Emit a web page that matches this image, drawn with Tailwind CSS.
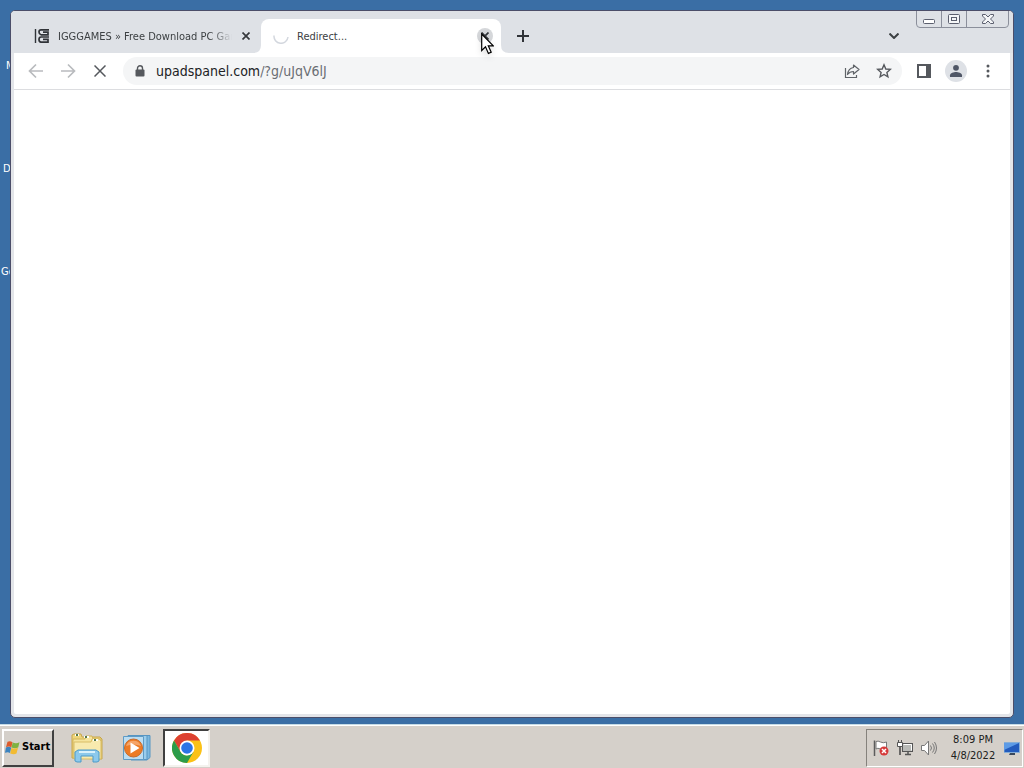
<!DOCTYPE html>
<html lang="en">
<head>
<meta charset="utf-8">
<title>Desktop</title>
<script src="https://cdn.jsdelivr.net/npm/@tailwindcss/browser@4"></script>
</head>
<body class="h-screen overflow-hidden flex flex-col bg-[#3a6ea5] font-['DejaVu_Sans_Condensed','DejaVu_Sans',sans-serif] text-[#3c4043]">
<main class="relative flex-1 min-h-0 flex pt-[10px] pl-[10px] pr-[10px] pb-[6px]">
  <!-- desktop shortcut labels, partly behind the window -->
  <div class="absolute left-0 top-0 w-[11px] h-full overflow-hidden text-white text-[11px] leading-4">
    <span class="absolute left-[6px] top-[58px]">M</span>
    <span class="absolute left-[3px] top-[161px]">D</span>
    <span class="absolute left-[1px] top-[264px]">Go</span>
  </div>

  <section class="relative flex-1 min-w-0 flex flex-col bg-[#e3e5e9] border border-[#4b4e69] rounded-[5px] px-[3px] pb-[3px] overflow-hidden" aria-label="Browser window">
    <!-- tab strip -->
    <header class="h-[42px] shrink-0 flex items-end bg-[#dee1e6] -mx-[3px] pl-[10px]">
      <div class="w-[240px] h-[34px] flex items-center pl-[13px] pr-[7px]">
        <svg class="w-4 h-4 shrink-0" viewBox="0 0 16 16" fill="none" stroke="#303338"><path d="M1.500 1v14" stroke-width="1.400"/><path d="M15 1.800H7Q5 1.800 5 4t2 2.800h7V4.200H9M15 9H7Q5 9 5 11.500t2 2.700h7v-2.800H9" stroke-width="1.700"/></svg>
        <a href="#" class="flex-1 min-w-0 ml-[8px] mr-[6px] h-4 overflow-hidden whitespace-nowrap text-[11px] leading-[18px] [mask-image:linear-gradient(to_right,black_88%,transparent)]">IGGGAMES » Free Download PC Games</a>
        <button class="w-4 h-4 shrink-0 flex items-center justify-center" aria-label="Close tab"><svg class="w-2 h-2" viewBox="0 0 8 8" stroke="#36393d" stroke-width="1.700"><path d="M.5.5l7 7M7.500.5l-7 7"/></svg></button>
      </div>
      <div class="relative w-[240px] h-[34px] flex items-center pl-[12px] pr-[8px] bg-white rounded-t-[8px]">
        <svg class="absolute -left-[8px] bottom-0 w-2 h-2" viewBox="0 0 8 8"><path d="M8 0v8H0Q8 8 8 0" fill="#fff"/></svg>
        <svg class="absolute -right-[8px] bottom-0 w-2 h-2" viewBox="0 0 8 8"><path d="M0 0v8h8Q0 8 0 0" fill="#fff"/></svg>
        <svg class="w-4 h-4 shrink-0" viewBox="0 0 16 16" fill="none" stroke="#d3d7de" stroke-width="1.500"><path d="M1 7.500a7 7 0 0 0 14 1.500"/></svg>
        <a href="#" class="flex-1 ml-[8px] h-4 text-[11px] leading-[18px]">Redirect...</a>
        <button class="w-4 h-4 shrink-0 flex items-center justify-center rounded-full bg-[#d5d7da]" aria-label="Close tab"><svg class="w-2 h-2" viewBox="0 0 8 8" stroke="#36393d" stroke-width="1.700"><path d="M.5.5l7 7M7.500.5l-7 7"/></svg></button>
      </div>
      <button class="w-7 h-[34px] ml-[8px] flex items-center justify-center" aria-label="New tab"><svg class="w-3 h-3" viewBox="0 0 12 12" stroke="#303338" stroke-width="2"><path d="M6 0v12M0 6h12"/></svg></button>
      <button class="w-7 h-[34px] ml-auto mr-[105px] flex items-center justify-center" aria-label="Search tabs"><svg class="w-[10px] h-[6px]" viewBox="0 0 10 6" fill="none" stroke="#3c4043" stroke-width="2"><path d="M.5.5L5 5 9.500.5"/></svg></button>
    </header>

    <!-- caption buttons -->
    <div class="absolute right-[4px] -top-[1px] w-[93px] h-[18px] flex border border-[#8b8f9b] rounded-b-[4px]">
      <button class="w-[25px] flex items-center justify-center border-r border-[#8b8f9b]" aria-label="Minimize"><svg class="w-3 h-[5px] mt-1" viewBox="0 0 12 5"><rect x=".5" y=".5" width="11" height="4" rx="1" fill="#fff" stroke="#5b5f6e"/></svg></button>
      <button class="w-[25px] flex items-center justify-center border-r border-[#8b8f9b]" aria-label="Maximize"><svg class="w-3 h-[10px]" viewBox="0 0 12 10" fill="#f5f6f8" stroke="#5b5f6e"><rect x=".5" y=".5" width="11" height="9" rx="1"/><rect x="3.500" y="3.500" width="5" height="3"/></svg></button>
      <button class="flex-1 flex items-center justify-center" aria-label="Close"><svg class="w-3 h-[10px]" viewBox="0 0 12 10"><path d="M.5.5h3L6 3 8.500.5h3v1.500L8.500 5l3 3v1.500h-3L6 7 3.500 9.500h-3V8l3-3-3-3z" fill="#f5f6f8" stroke="#5b5f6e"/></svg></button>
    </div>

    <!-- toolbar -->
    <nav class="h-[37px] shrink-0 flex items-center bg-white border-b border-[#dcdde0] pl-[6px] pr-[6px] text-[#5f6368]">
      <button class="w-8 h-7 flex items-center justify-center" aria-label="Back"><svg class="w-4 h-4" viewBox="0 0 16 16" fill="none" stroke="#b9bbbe" stroke-width="1.700"><path d="M15 8H2M8 1.500L1.500 8 8 14.500"/></svg></button>
      <button class="w-8 h-7 flex items-center justify-center" aria-label="Forward"><svg class="w-4 h-4" viewBox="0 0 16 16" fill="none" stroke="#b9bbbe" stroke-width="1.700"><path d="M1 8h13M8 1.500L14.500 8 8 14.500"/></svg></button>
      <button class="w-8 h-7 flex items-center justify-center" aria-label="Stop loading"><svg class="w-3 h-3" viewBox="0 0 12 12" stroke="#55585d" stroke-width="1.500"><path d="M.5.5l11 11M11.500.5l-11 11"/></svg></button>
      <div class="flex-1 min-w-0 h-7 ml-[7px] flex items-center bg-[#f4f5f6] rounded-full pl-[12px] pr-[2px]">
        <svg class="w-[10px] h-3 shrink-0" viewBox="0 0 10 12"><path d="M2.500 5V3.300a2.500 2.500 0 0 1 5 0V5" fill="none" stroke="#55585d" stroke-width="1.400"/><rect x=".5" y="4.500" width="9" height="7" rx="1" fill="#55585d"/></svg>
        <a href="#" class="flex-1 ml-[11px] text-[14px] leading-5 whitespace-nowrap text-[#6a6e73]"><span class="text-[#202124]">upadspanel.com</span>/?g/uJqV6lJ</a>
        <button class="w-8 h-7 flex items-center justify-center" aria-label="Share"><svg class="w-4 h-4" viewBox="0 0 16 16" fill="none" stroke="#5f6368" stroke-width="1.200"><path d="M1.500 5v9.500h11V12"/><path d="M9.500 2l5.500 4.500-5.500 4.500V8.500C6.500 8.500 5 9.500 3.500 11.500 4 7.500 6 5 9.500 4.500z" stroke-linejoin="round"/></svg></button>
        <button class="w-8 h-7 flex items-center justify-center" aria-label="Bookmark"><svg class="w-4 h-4" viewBox="0 0 16 16" fill="none" stroke="#55585d" stroke-width="1.400"><path d="M8 1.800l1.800 4.200 4.500.4-3.400 3 1 4.400L8 11.500l-3.900 2.300 1-4.400-3.400-3 4.500-.4z"/></svg></button>
      </div>
      <button class="w-8 h-7 ml-[6px] flex items-center justify-center" aria-label="Side panel"><svg class="w-[14px] h-[14px]" viewBox="0 0 14 14"><path d="M1 1h12v12H1z" fill="#fff" stroke="#55585d" stroke-width="2"/><path d="M9 0h5v14H9z" fill="#55585d"/></svg></button>
      <button class="w-8 h-7 flex items-center justify-center" aria-label="Profile"><svg class="w-[22px] h-[22px]" viewBox="0 0 22 22"><circle cx="11" cy="11" r="11" fill="#dee1e6"/><g fill="#4f5666"><circle cx="11" cy="7.800" r="2.900"/><path d="M5 17v-1.700c0-2.300 4-3.300 6-3.300s6 1 6 3.300V17z"/></g></svg></button>
      <button class="w-8 h-7 flex items-center justify-center" aria-label="Menu"><svg class="w-1 h-[14px]" viewBox="0 0 4 14" fill="#55585d"><circle cx="2" cy="2" r="1.500"/><circle cx="2" cy="7" r="1.500"/><circle cx="2" cy="12" r="1.500"/></svg></button>
    </nav>
    <div class="flex-1 bg-white rounded-b-[2px]"></div>
  </section>

  <!-- mouse pointer -->
  <svg class="absolute left-[481px] top-[33px] w-[13px] h-[22px] drop-shadow-md pointer-events-none" viewBox="0 0 13 22"><path d="M.7 1v16.500l3.800-3.700 2.900 6.600 2.800-1.200-2.900-6.400h5z" fill="#fff" stroke="#000" stroke-width="1.200"/></svg>
</main>

<!-- taskbar -->
<footer class="h-[44px] shrink-0 flex items-center bg-[#d5d0ca] border-t border-[#c6dbe5] shadow-[inset_0_1px_0_#fff] pt-[2px] pl-[2px]">
  <button class="w-[52px] h-[38px] flex items-center gap-[2px] pl-px border-2 border-t-white border-l-white border-b-[#404040] border-r-[#404040] font-bold text-[11px] text-black">
    <svg class="w-[15px] h-[15px] shrink-0" viewBox="0 0 15 15"><path d="M2.500 1.800Q5 .3 7.500 2.200L6.300 7.400Q4 5.800 1 7.300z" fill="#dd5a2b"/><path d="M7.700 2.400Q11 4 14.500 2.300L13.200 7.500Q10 9 6.500 7.600z" fill="#7fb241"/><path d="M.9 7.500Q4 6 6.200 7.700l-1.200 5.400Q3 11.500 0 12.800z" fill="#3c83bf"/><path d="M6.400 7.900Q10 9.300 13 7.800L11.500 13.500Q9 15 5.200 13.400z" fill="#f2bb32"/></svg>Start
  </button>
  <button class="w-[34px] h-[38px] ml-[16px] flex items-center justify-center" aria-label="File Explorer">
    <svg class="w-8 h-[30px]" viewBox="0 0 32 30" stroke-linejoin="round"><path d="M1 25V2l2-1h7l1 3h18l2 2v20z" fill="#eed57a" stroke="#c7a64d"/><path d="M2 25V6h12l1-3h6l1 3h8v19z" fill="#f5e49c" stroke="#d2b45b"/><path d="M3 26V9h17l1-3h7l2 2v18z" fill="#f8eaae" stroke="#d8bd67"/><path d="M4 2h4M13 4h5M22 7h5" stroke="#fff" stroke-width="2"/><path d="M5 2h2M14 4h2M23 7h2" stroke="#53794b" stroke-width="2"/><path d="M4 28v-9l3-2h18l3 2v9l-2 1h-4v-6H10v6H6z" fill="#8cc9ec" stroke="#4d9ac9"/><path d="M8 19h16" stroke="#d9f1fb" stroke-width="2"/></svg>
  </button>
  <button class="w-8 h-[38px] ml-[17px] flex items-center justify-center" aria-label="Media Player">
    <svg class="w-7 h-[26px]" viewBox="0 0 28 26"><path d="M8 .5h19v22l-3 2.500H8z" fill="#7cb8df" stroke="#5795c2"/><path d="M5 .5h19v24H5z" fill="#9bcdec" stroke="#5795c2"/><path d="M.5 1.500h20v23H.5z" fill="#bcddf1" stroke="#5e9bc6"/><circle cx="10.500" cy="13" r="9" fill="#ed7b25" stroke="#c76a2a"/><path d="M3 11a8 8 0 0 1 15 0q-7-3-15 0" fill="#f5a569"/><path d="M7.500 7.500v11l9-5.500z" fill="#fff"/></svg>
  </button>
  <button class="w-[47px] h-[38px] ml-[10px] flex items-center justify-center bg-white border-2 border-t-[#404040] border-l-[#404040] border-b-[#f4f2ee] border-r-[#f4f2ee]" aria-label="Google Chrome">
    <svg class="w-[30px] h-[30px]" viewBox="0 0 30 30"><circle cx="15" cy="15" r="15" fill="#fbc116"/><path d="M2 7.500A15 15 0 0 1 28 7.500H15L8.500 18.700z" fill="#dd4132"/><path d="M2 7.500L8.500 18.750A7.500 7.500 0 0 0 15 22.500l6.500-3.750L15 30A15 15 0 0 1 2 7.500" fill="#2c9c4a"/><circle cx="15" cy="15" r="7.500" fill="#fff"/><circle cx="15" cy="15" r="5.800" fill="#2b74e4"/></svg>
  </button>
  <div class="h-[38px] ml-auto flex items-center border border-t-[#85827c] border-l-[#85827c] border-b-white border-r-white pl-[6px] w-[157px] mr-[1px]">
    <button class="w-4 h-4 shrink-0" aria-label="Action Center"><svg class="w-4 h-4" viewBox="0 0 16 16"><path d="M1.500 .5V16" stroke="#5c5c5c" stroke-width="1.500"/><path d="M3 1.500q2-1 4.500.5T13.500 2v7q-3 1.500-6 0T3 9z" fill="#fff" stroke="#777"/><circle cx="11" cy="11" r="4.500" fill="#d63b3b"/><path d="M9 9l4 4M13 9l-4 4" stroke="#fff" stroke-width="1.500"/></svg></button>
    <button class="w-4 h-4 shrink-0 ml-[8px]" aria-label="Network"><svg class="w-4 h-4" viewBox="0 0 16 16"><rect x="5.500" y="3.500" width="10" height="8" fill="#b9bab7" stroke="#555"/><path d="M6.500 4.500h8v6" fill="none" stroke="#fff"/><path d="M8 14.500h6M11 12v2" stroke="#555" stroke-width="1.500"/><path d="M.5 2.500h5v4h-5zM1.500 0v2M4.500 0v2" fill="#fff" stroke="#555"/><path d="M3 7v8" stroke="#444" stroke-width="1.500"/></svg></button>
    <button class="w-4 h-4 shrink-0 ml-[8px]" aria-label="Volume"><svg class="w-4 h-4" viewBox="0 0 16 16" fill="none" stroke="#777"><path d="M.5 5.500h3l4-4.500v14l-4-4.500h-3z" fill="#fff"/><path d="M9.500 5.500q2 2.500 0 5M11.500 3.500q3.500 4.500 0 9M13.500 2q4 6 0 12"/></svg></button>
    <time class="ml-[8px] w-[56px] text-center whitespace-nowrap text-[11px] leading-4 text-[#202020]" datetime="2022-04-08T20:09">8:09 PM<br>4/8/2022</time>
    <button class="w-4 h-4 shrink-0 ml-[3px]" aria-label="Show desktop"><svg class="w-4 h-4" viewBox="0 0 16 16"><path d="M0 2.500h15.500v10H0z" fill="#235bbd" stroke="#86aed8"/><path d="M0 3h15L0 10z" fill="#5d9be6"/><path d="M6 13h5v2H5z" fill="#39485d"/></svg></button>
  </div>
</footer>
</body>
</html>
